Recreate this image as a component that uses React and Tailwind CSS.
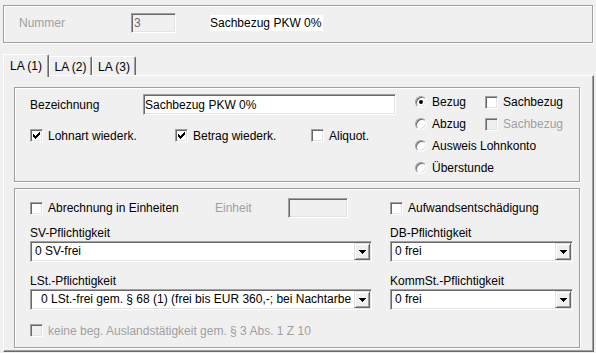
const sunken =
  "border border-t-[#a0a0a0] border-l-[#a0a0a0] border-r-white border-b-white shadow-[inset_1px_1px_0_#696969,inset_-1px_-1px_0_#e3e3e3]"
const raised =
  "border border-t-[#e3e3e3] border-l-[#e3e3e3] border-r-[#696969] border-b-[#696969] shadow-[inset_1px_1px_0_#fff,inset_-1px_-1px_0_#a0a0a0] bg-[#f0f0f0]"
const group = "border border-[#a0a0a0] shadow-[1px_1px_0_#fff,inset_1px_1px_0_#fff]"

function Check({ checked, disabled }) {
  // klassischer Haken, 7x7 Pixel
  const cols = [2, 3, 4, 3, 2, 1, 0]
  return (
    <span
      className={`w-[13px] h-[13px] shrink-0 flex items-center justify-center ${sunken} ${
        disabled ? "bg-[#f0f0f0]" : "bg-white"
      }`}
    >
      {checked && (
        <svg width="7" height="7" viewBox="0 0 7 7" shapeRendering="crispEdges">
          {cols.map((y, x) => (
            <rect key={x} x={x} y={y} width="1" height="3" fill="#000" />
          ))}
        </svg>
      )}
    </span>
  )
}

function Radio({ checked }) {
  return (
    <span className="w-[12px] h-[12px] shrink-0 rounded-full bg-white border border-t-[#a0a0a0] border-l-[#a0a0a0] border-r-white border-b-white shadow-[inset_1px_1px_0_#696969,inset_-1px_-1px_0_#e3e3e3] flex items-center justify-center">
      {checked && <span className="w-[4px] h-[4px] rounded-full bg-black" />}
    </span>
  )
}

function CheckItem({ label, checked, disabled, className = "" }) {
  return (
    <div className={`flex items-center gap-[5px] ${className}`}>
      <Check checked={checked} disabled={disabled} />
      <span className={`whitespace-nowrap ${disabled ? "text-[#a0a0a0]" : ""}`}>{label}</span>
    </div>
  )
}

function RadioItem({ label, checked, className = "" }) {
  return (
    <div className={`flex items-center gap-[5px] ${className}`}>
      <Radio checked={checked} />
      <span className="whitespace-nowrap">{label}</span>
    </div>
  )
}

function Select({ value, className = "", textClass = "pl-[3px]" }) {
  return (
    <div className={`h-[21px] p-[1px] bg-white flex items-stretch ${sunken} ${className}`}>
      <span className={`flex-1 overflow-hidden whitespace-nowrap leading-[17px] ${textClass}`}>{value}</span>
      <span className={`w-[16px] shrink-0 flex items-center justify-center ${raised}`}>
        <svg width="7" height="4" viewBox="0 0 7 4" shapeRendering="crispEdges">
          <rect x="0" y="0" width="7" height="1" fill="#000" />
          <rect x="1" y="1" width="5" height="1" fill="#000" />
          <rect x="2" y="2" width="3" height="1" fill="#000" />
          <rect x="3" y="3" width="1" height="1" fill="#000" />
        </svg>
      </span>
    </div>
  )
}

export default function App() {
  return (
    <div className="w-[596px] h-[353px] overflow-hidden bg-[#f0f0f0] font-['Liberation_Sans',Arial,sans-serif] text-[12px] leading-[14px] text-black pl-[3px] pt-[5px]">
      {/* Kopfbereich */}
      <div className={`w-[590px] h-[38px] flex items-center pb-[2px] pl-[15px] ${group}`}>
        <span className="w-[112px] text-[#a0a0a0]">Nummer</span>
        <div className={`w-[45px] h-[20px] flex items-center pl-[2px] bg-[#f0f0f0] text-[#6d6d6d] ${sunken}`}>3</div>
        <span className="ml-[34px] bg-white pr-[2px] leading-[16px]">Sachbezug PKW 0%</span>
      </div>

      {/* Reiter */}
      <div className="mt-[11px] mb-[-2px] h-[23px] flex items-end relative z-10">
        <div className="w-[46px] h-[23px] pt-[4px] text-center bg-[#f0f0f0] rounded-t-[2px] border-t border-l border-r border-t-white border-l-white border-r-[#696969] shadow-[inset_-1px_0_0_#a0a0a0]">
          LA (1)
        </div>
        <div className="w-[43px] h-[19px] mb-[2px] pt-[3px] text-center rounded-t-[2px] border-t border-l border-r border-t-white border-l-white border-r-[#696969] shadow-[inset_-1px_0_0_#a0a0a0]">
          LA (2)
        </div>
        <div className="w-[44px] h-[19px] mb-[2px] pt-[3px] text-center rounded-t-[2px] border-t border-l border-r border-t-white border-l-white border-r-[#696969] shadow-[inset_-1px_0_0_#a0a0a0]">
          LA (3)
        </div>
      </div>

      {/* Reiterinhalt */}
      <div className="w-[591px] h-[277px] pl-[10px] pt-[11px] border border-t-white border-l-white border-r-[#696969] border-b-[#696969] shadow-[inset_-1px_-1px_0_#a0a0a0]">
        <div className={`w-[566px] h-[95px] flex ${group}`}>
          <div className="w-[400px] pl-[15px] pt-[6px]">
            <div className="flex items-center">
              <span className="w-[113px]">Bezeichnung</span>
              <div className={`w-[253px] h-[21px] flex items-center pl-[1px] bg-white ${sunken}`}>Sachbezug PKW 0%</div>
            </div>
            <div className="mt-[13px] h-[15px] flex items-center">
              <CheckItem label="Lohnart wiederk." checked className="w-[145px]" />
              <CheckItem label="Betrag wiederk." checked className="w-[136px]" />
              <CheckItem label="Aliquot." />
            </div>
          </div>
          <div className="pt-[3px]">
            <div className="h-[22px] flex items-center">
              <RadioItem label="Bezug" checked className="w-[70px]" />
              <CheckItem label="Sachbezug" />
            </div>
            <div className="h-[22px] flex items-center">
              <RadioItem label="Abzug" className="w-[70px]" />
              <CheckItem label="Sachbezug" disabled />
            </div>
            <div className="h-[22px] flex items-center">
              <RadioItem label="Ausweis Lohnkonto" />
            </div>
            <div className="h-[22px] flex items-center">
              <RadioItem label="Überstunde" />
            </div>
          </div>
        </div>

        <div className={`mt-[6px] w-[566px] h-[160px] ${group}`}>
          <div className="mt-[9px] h-[20px] flex items-center">
            <div className="w-[375px] pl-[15px] flex items-center">
              <CheckItem label="Abrechnung in Einheiten" className="w-[185px]" />
              <span className="w-[73px] text-[#a0a0a0]">Einheit</span>
              <div className={`w-[60px] h-[20px] bg-[#f0f0f0] ${sunken}`} />
            </div>
            <CheckItem label="Aufwandsentschädigung" />
          </div>

          <div className="mt-[8px] flex">
            <div className="w-[375px] pl-[15px]">
              <div className="h-[15px] leading-[15px]">SV-Pflichtigkeit</div>
              <Select value="0 SV-frei" className="w-[342px]" />
            </div>
            <div>
              <div className="h-[15px] leading-[15px]">DB-Pflichtigkeit</div>
              <Select value="0 frei" className="w-[183px]" />
            </div>
          </div>

          <div className="mt-[12px] flex">
            <div className="w-[375px] pl-[15px]">
              <div className="h-[15px] leading-[15px]">LSt.-Pflichtigkeit</div>
              <Select
                value="0 LSt.-frei gem. § 68 (1) (frei bis EUR 360,-; bei Nachtarbe"
                className="w-[342px]"
                textClass="pl-[9px]"
              />
            </div>
            <div>
              <div className="h-[15px] leading-[15px]">KommSt.-Pflichtigkeit</div>
              <Select value="0 frei" className="w-[183px]" />
            </div>
          </div>

          <div className="mt-[13px] h-[15px] pl-[15px] flex items-center">
            <CheckItem label="keine beg. Auslandstätigkeit gem. § 3 Abs. 1 Z 10" disabled />
          </div>
        </div>
      </div>
    </div>
  )
}
